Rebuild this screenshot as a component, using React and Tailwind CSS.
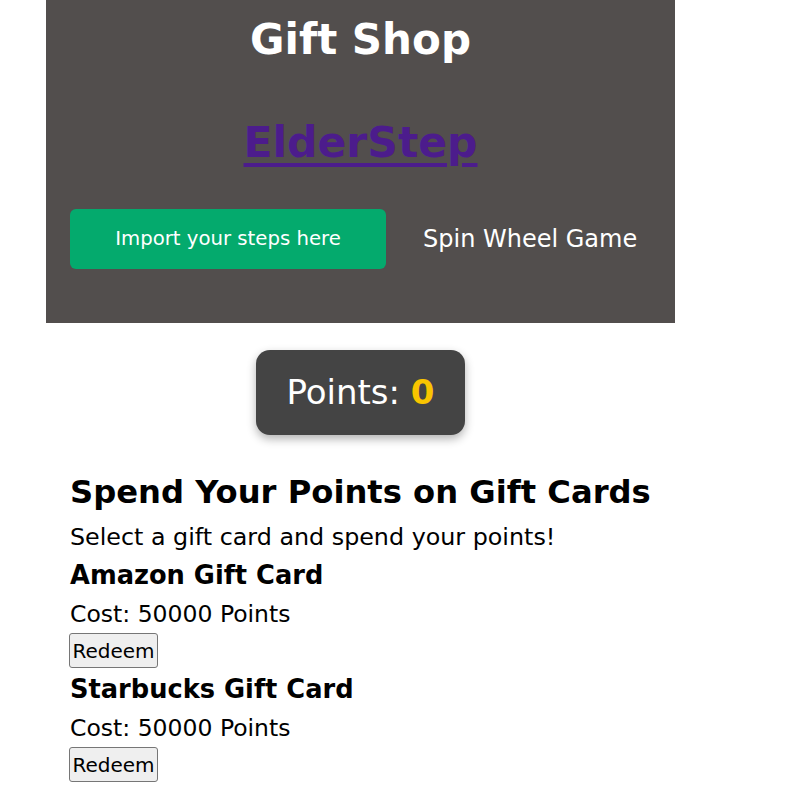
export default function App() {
  const cards = [
    { name: "Amazon Gift Card", cost: 50000 },
    { name: "Starbucks Gift Card", cost: 50000 },
  ];

  return (
    <div className="min-h-[789px] bg-white text-black" style={{ fontFamily: '"DejaVu Sans", sans-serif' }}>
      <div className="ml-[46px] flex h-[323px] w-[629px] flex-col items-center bg-[#524e4d]">
        <h1 className="text-[42px] font-bold leading-[80px] text-white">Gift Shop</h1>
        <a href="#" className="mt-[23px] text-[42.5px] font-bold leading-[80px] text-[#4c1c8c] underline decoration-[4px] underline-offset-[6px]">
          ElderStep
        </a>
        <div className="mt-[26px] flex items-center self-stretch px-[24px]">
          <button className="h-[60px] w-[316px] rounded-md bg-[#04aa6d] text-[19.7px] text-white">
            Import your steps here
          </button>
          <span className="ml-[37px] text-[24px] text-white">Spin Wheel Game</span>
        </div>
      </div>

      <div className="ml-[46px] flex w-[629px] justify-center pt-[27px]">
        <div className="flex h-[85px] w-[209px] items-center justify-center rounded-[14px] bg-[#444444] text-[34px] text-white shadow-[0_4px_10px_rgba(0,0,0,0.3)]">
          <span>Points:&nbsp;</span>
          <span className="font-bold text-[#f9c500]">0</span>
        </div>
      </div>

      <div className="ml-[70px]">
        <h2 className="mt-[35px] text-[32.2px] font-bold leading-[44px]">Spend Your Points on Gift Cards</h2>
        <p className="mt-[8px] text-[23.8px] leading-[30px]">Select a gift card and spend your points!</p>
        {cards.map((c, i) => (
          <div key={c.name} className={i === 0 ? "mt-[6px]" : "mt-[4px]"}>
            <h3 className="text-[25.7px] font-bold leading-[34px]">{c.name}</h3>
            <p className="mt-[7px] text-[23.5px] leading-[30px]">Cost: {c.cost} Points</p>
            <button className="-ml-px mt-[4px] h-[35px] w-[89px] rounded-[3px] border border-[#767676] bg-[#efefef] text-[20px]">
              Redeem
            </button>
          </div>
        ))}
      </div>
    </div>
  );
}
